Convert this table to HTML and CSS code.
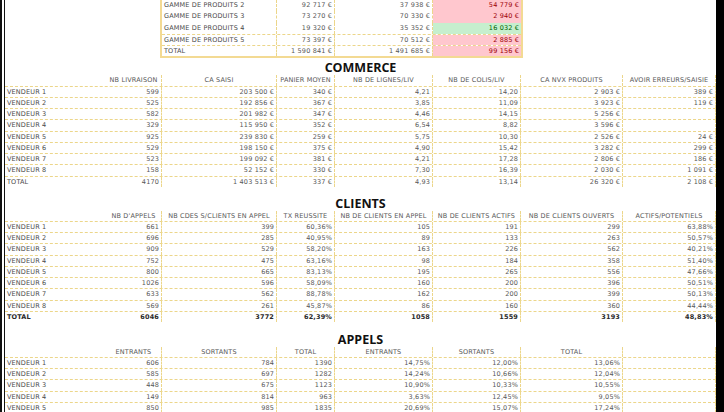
FILE: index.html
```html
<!DOCTYPE html>
<html lang="fr">
<head>
<meta charset="utf-8">
<title>Tableau de bord commercial</title>
<link rel="stylesheet" href="styles.css">
</head>
<body>
<div class="frame">
  <div class="edge-left"></div>
  <main class="sheet">
    <section class="summary-wrap">
      <div class="summary">
        <div class="srow"><div class="c l">GAMME DE PRODUITS 2</div><div class="c">92 717 €</div><div class="c">37 938 €</div><div class="c bad">54 779 €</div></div>
        <div class="srow"><div class="c l">GAMME DE PRODUITS 3</div><div class="c">73 270 €</div><div class="c">70 330 €</div><div class="c bad">2 940 €</div></div>
        <div class="srow"><div class="c l">GAMME DE PRODUITS 4</div><div class="c">19 320 €</div><div class="c">35 352 €</div><div class="c good">16 032 €</div></div>
        <div class="srow lined"><div class="c l">GAMME DE PRODUITS 5</div><div class="c">73 397 €</div><div class="c">70 512 €</div><div class="c bad">2 885 €</div></div>
        <div class="srow lined"><div class="c l">TOTAL</div><div class="c">1 590 841 €</div><div class="c">1 491 685 €</div><div class="c bad">99 156 €</div></div>
      </div>
    </section>

    <h2 class="title title-commerce">COMMERCE</h2>
    <div class="grid">
      <div class="row head"><div class="c l"></div><div class="c">NB LIVRAISON</div><div class="c">CA SAISI</div><div class="c">PANIER MOYEN</div><div class="c">NB DE LIGNES/LIV</div><div class="c">NB DE COLIS/LIV</div><div class="c">CA NVX PRODUITS</div><div class="c">AVOIR ERREURS/SAISIE</div></div>
      <div class="row"><div class="c l">VENDEUR 1</div><div class="c">599</div><div class="c">203 500 €</div><div class="c">340 €</div><div class="c">4,21</div><div class="c">14,20</div><div class="c">2 903 €</div><div class="c">389 €</div></div>
      <div class="row"><div class="c l">VENDEUR 2</div><div class="c">525</div><div class="c">192 856 €</div><div class="c">367 €</div><div class="c">3,85</div><div class="c">11,09</div><div class="c">3 923 €</div><div class="c">119 €</div></div>
      <div class="row"><div class="c l">VENDEUR 3</div><div class="c">582</div><div class="c">201 982 €</div><div class="c">347 €</div><div class="c">4,46</div><div class="c">14,15</div><div class="c">5 256 €</div><div class="c"></div></div>
      <div class="row"><div class="c l">VENDEUR 4</div><div class="c">329</div><div class="c">115 950 €</div><div class="c">352 €</div><div class="c">6,54</div><div class="c">8,82</div><div class="c">3 596 €</div><div class="c"></div></div>
      <div class="row"><div class="c l">VENDEUR 5</div><div class="c">925</div><div class="c">239 830 €</div><div class="c">259 €</div><div class="c">5,75</div><div class="c">10,30</div><div class="c">2 526 €</div><div class="c">24 €</div></div>
      <div class="row"><div class="c l">VENDEUR 6</div><div class="c">529</div><div class="c">198 150 €</div><div class="c">375 €</div><div class="c">4,90</div><div class="c">15,42</div><div class="c">3 282 €</div><div class="c">299 €</div></div>
      <div class="row"><div class="c l">VENDEUR 7</div><div class="c">523</div><div class="c">199 092 €</div><div class="c">381 €</div><div class="c">4,21</div><div class="c">17,28</div><div class="c">2 806 €</div><div class="c">186 €</div></div>
      <div class="row"><div class="c l">VENDEUR 8</div><div class="c">158</div><div class="c">52 152 €</div><div class="c">330 €</div><div class="c">7,30</div><div class="c">16,39</div><div class="c">2 030 €</div><div class="c">1 091 €</div></div>
      <div class="row total"><div class="c l">TOTAL</div><div class="c">4170</div><div class="c">1 403 513 €</div><div class="c">337 €</div><div class="c">4,93</div><div class="c">13,14</div><div class="c">26 320 €</div><div class="c">2 108 €</div></div>
    </div>

    <h2 class="title title-clients">CLIENTS</h2>
    <div class="grid">
      <div class="row head"><div class="c l"></div><div class="c">NB D'APPELS</div><div class="c">NB CDES S/CLIENTS EN APPEL</div><div class="c">TX REUSSITE</div><div class="c">NB DE CLIENTS EN APPEL</div><div class="c">NB DE CLIENTS ACTIFS</div><div class="c">NB DE CLIENTS OUVERTS</div><div class="c">ACTIFS/POTENTIELS</div></div>
      <div class="row"><div class="c l">VENDEUR 1</div><div class="c">661</div><div class="c">399</div><div class="c">60,36%</div><div class="c">105</div><div class="c">191</div><div class="c">299</div><div class="c">63,88%</div></div>
      <div class="row"><div class="c l">VENDEUR 2</div><div class="c">696</div><div class="c">285</div><div class="c">40,95%</div><div class="c">89</div><div class="c">133</div><div class="c">263</div><div class="c">50,57%</div></div>
      <div class="row"><div class="c l">VENDEUR 3</div><div class="c">909</div><div class="c">529</div><div class="c">58,20%</div><div class="c">163</div><div class="c">226</div><div class="c">562</div><div class="c">40,21%</div></div>
      <div class="row"><div class="c l">VENDEUR 4</div><div class="c">752</div><div class="c">475</div><div class="c">63,16%</div><div class="c">98</div><div class="c">184</div><div class="c">358</div><div class="c">51,40%</div></div>
      <div class="row"><div class="c l">VENDEUR 5</div><div class="c">800</div><div class="c">665</div><div class="c">83,13%</div><div class="c">195</div><div class="c">265</div><div class="c">556</div><div class="c">47,66%</div></div>
      <div class="row"><div class="c l">VENDEUR 6</div><div class="c">1026</div><div class="c">596</div><div class="c">58,09%</div><div class="c">160</div><div class="c">200</div><div class="c">396</div><div class="c">50,51%</div></div>
      <div class="row"><div class="c l">VENDEUR 7</div><div class="c">633</div><div class="c">562</div><div class="c">88,78%</div><div class="c">162</div><div class="c">200</div><div class="c">399</div><div class="c">50,13%</div></div>
      <div class="row"><div class="c l">VENDEUR 8</div><div class="c">569</div><div class="c">261</div><div class="c">45,87%</div><div class="c">86</div><div class="c">160</div><div class="c">360</div><div class="c">44,44%</div></div>
      <div class="row total strong"><div class="c l">TOTAL</div><div class="c">6046</div><div class="c">3772</div><div class="c">62,39%</div><div class="c">1058</div><div class="c">1559</div><div class="c">3193</div><div class="c">48,83%</div></div>
    </div>

    <h2 class="title title-appels">APPELS</h2>
    <div class="grid">
      <div class="row head"><div class="c l"></div><div class="c">ENTRANTS</div><div class="c">SORTANTS</div><div class="c">TOTAL</div><div class="c">ENTRANTS</div><div class="c">SORTANTS</div><div class="c">TOTAL</div><div class="c"></div></div>
      <div class="row"><div class="c l">VENDEUR 1</div><div class="c">606</div><div class="c">784</div><div class="c">1390</div><div class="c">14,75%</div><div class="c">12,00%</div><div class="c">13,06%</div><div class="c"></div></div>
      <div class="row"><div class="c l">VENDEUR 2</div><div class="c">585</div><div class="c">697</div><div class="c">1282</div><div class="c">14,24%</div><div class="c">10,66%</div><div class="c">12,04%</div><div class="c"></div></div>
      <div class="row"><div class="c l">VENDEUR 3</div><div class="c">448</div><div class="c">675</div><div class="c">1123</div><div class="c">10,90%</div><div class="c">10,33%</div><div class="c">10,55%</div><div class="c"></div></div>
      <div class="row"><div class="c l">VENDEUR 4</div><div class="c">149</div><div class="c">814</div><div class="c">963</div><div class="c">3,63%</div><div class="c">12,45%</div><div class="c">9,05%</div><div class="c"></div></div>
      <div class="row"><div class="c l">VENDEUR 5</div><div class="c">850</div><div class="c">985</div><div class="c">1835</div><div class="c">20,69%</div><div class="c">15,07%</div><div class="c">17,24%</div><div class="c"></div></div>
    </div>
  </main>
  <div class="edge-right"></div>
</div>
</body>
</html>
```
FILE: styles.css
```css
* { box-sizing: border-box; }

html, body {
  margin: 0;
  padding: 0;
  background: #fff;
}

body {
  width: 724px;
  height: 412px;
  overflow: hidden;
  font-family: "DejaVu Sans", "Liberation Sans", sans-serif;
  font-size: 6.5px;
  letter-spacing: 0.15px;
  color: #585858;
}

.frame {
  display: flex;
  width: 724px;
  height: 412px;
}

.edge-left {
  flex: 0 0 5px;
  border-left: 2px solid #111;
  border-right: 1px solid #111;
}

.edge-right {
  flex: 0 0 8px;
  background: #000;
}

.sheet {
  flex: 0 0 711px;
  display: flex;
  flex-direction: column;
  overflow: hidden;
}

/* summary block */
.summary-wrap {
  display: flex;
  padding-left: 155px;
}

.summary {
  display: flex;
  flex-direction: column;
  border-left: 2px solid #f3da93;
  border-right: 2px solid #f3da93;
  border-bottom: 2px solid #f3da93;
}

.srow {
  display: grid;
  grid-template-columns: 115px 58px 98px 88px;
  height: 11.25px;
}

.srow.lined {
  border-top: 1px dashed #ecd68a;
}

.srow .c {
  line-height: 11.25px;
}

.srow.lined .c {
  line-height: 10.25px;
}

.c {
  text-align: right;
  padding: 0 2px 0 2px;
  white-space: nowrap;
  overflow: hidden;
  border-right: 1px dashed #ecd68a;
  line-height: 10.25px;
}

.c.l {
  text-align: left;
  border-right: none;
  color: #4a4a4a;
}

.srow .c.l {
  border-right: 1px dashed #ecd68a;
}

.srow .c:last-child {
  border-right: none;
}

.bad {
  background: #ffc7ce;
  color: #9c0006;
}

.good {
  background: #c6efce;
  color: #006100;
}

/* section titles */
.title {
  margin: 0;
  height: 14px;
  line-height: 14px;
  text-align: center;
  font-family: "Open Sans", "DejaVu Sans", sans-serif;
  font-weight: 700;
  font-size: 12.5px;
  letter-spacing: 0;
  color: #111;
}

.title-commerce { margin-top: 3px; }
.title-clients { margin-top: 8.75px; }
.title-appels { margin-top: 9.5px; }

/* main tables */
.grid {
  display: flex;
  flex-direction: column;
}

.row {
  display: grid;
  grid-template-columns: 101px 56px 115px 58px 98px 88px 102px 93px;
  height: 11.25px;
  border-bottom: 1px dashed #ecd68a;
}

.row.head .c {
  text-align: center;
  padding: 0 1px;
}

.row.total {
  border-bottom-color: transparent;
}

.row.strong .c {
  font-weight: 700;
  color: #2a2a2a;
}
```
